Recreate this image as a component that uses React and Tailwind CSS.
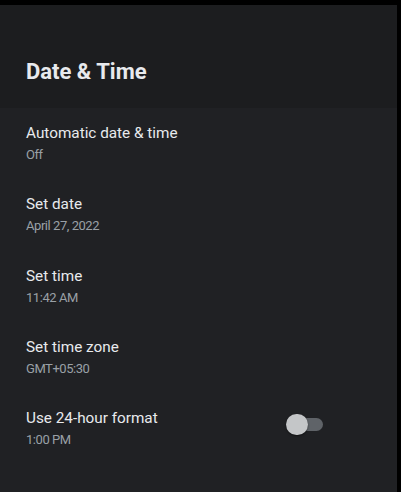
const rows = [
  { title: "Automatic date & time", value: "Off" },
  { title: "Set date", value: "April 27, 2022" },
  { title: "Set time", value: "11:42 AM" },
  { title: "Set time zone", value: "GMT+05:30" },
  { title: "Use 24-hour format", value: "1:00 PM", toggle: true },
];

const Toggle = () => (
  <div className="relative w-[37px] h-[21px]">
    <div className="absolute left-[8px] right-0 top-[4px] h-[13px] rounded-full bg-[#5f6368]" />
    <div className="absolute left-0 top-0 w-[22px] h-[21px] rounded-full bg-[#c4c6c8] shadow-[0_1px_2px_rgba(0,0,0,0.5)]" />
  </div>
);

export default function App() {
  return (
    <div
      className="w-[401px] h-[492px] bg-black pt-[5px] pr-[4px] overflow-hidden"
      style={{ fontFamily: "Roboto, 'Noto Sans', sans-serif" }}
    >
      <div className="h-full flex flex-col">
        <div className="h-[103px] bg-[#1c1d1f] pt-[56px] px-[26px]">
          <h1 className="text-[22px] leading-[22px] font-bold text-[#e8eaed]">Date &amp; Time</h1>
        </div>
        <div className="flex-1 bg-[#202124]">
          {rows.map((row) => (
            <div key={row.title} className="h-[71.3px] flex items-start justify-between pl-[26px] pr-[74px] pt-[17px]">
              <div className="flex flex-col gap-[7px]">
                <div className="text-[15.3px] leading-[16px] text-[#e8eaed]">{row.title}</div>
                <div className="text-[13px] leading-[13px] text-[#9aa0a6] tracking-[-0.45px]">{row.value}</div>
              </div>
              {row.toggle && (
                <div className="mt-[4px]">
                  <Toggle />
                </div>
              )}
            </div>
          ))}
        </div>
      </div>
    </div>
  );
}
